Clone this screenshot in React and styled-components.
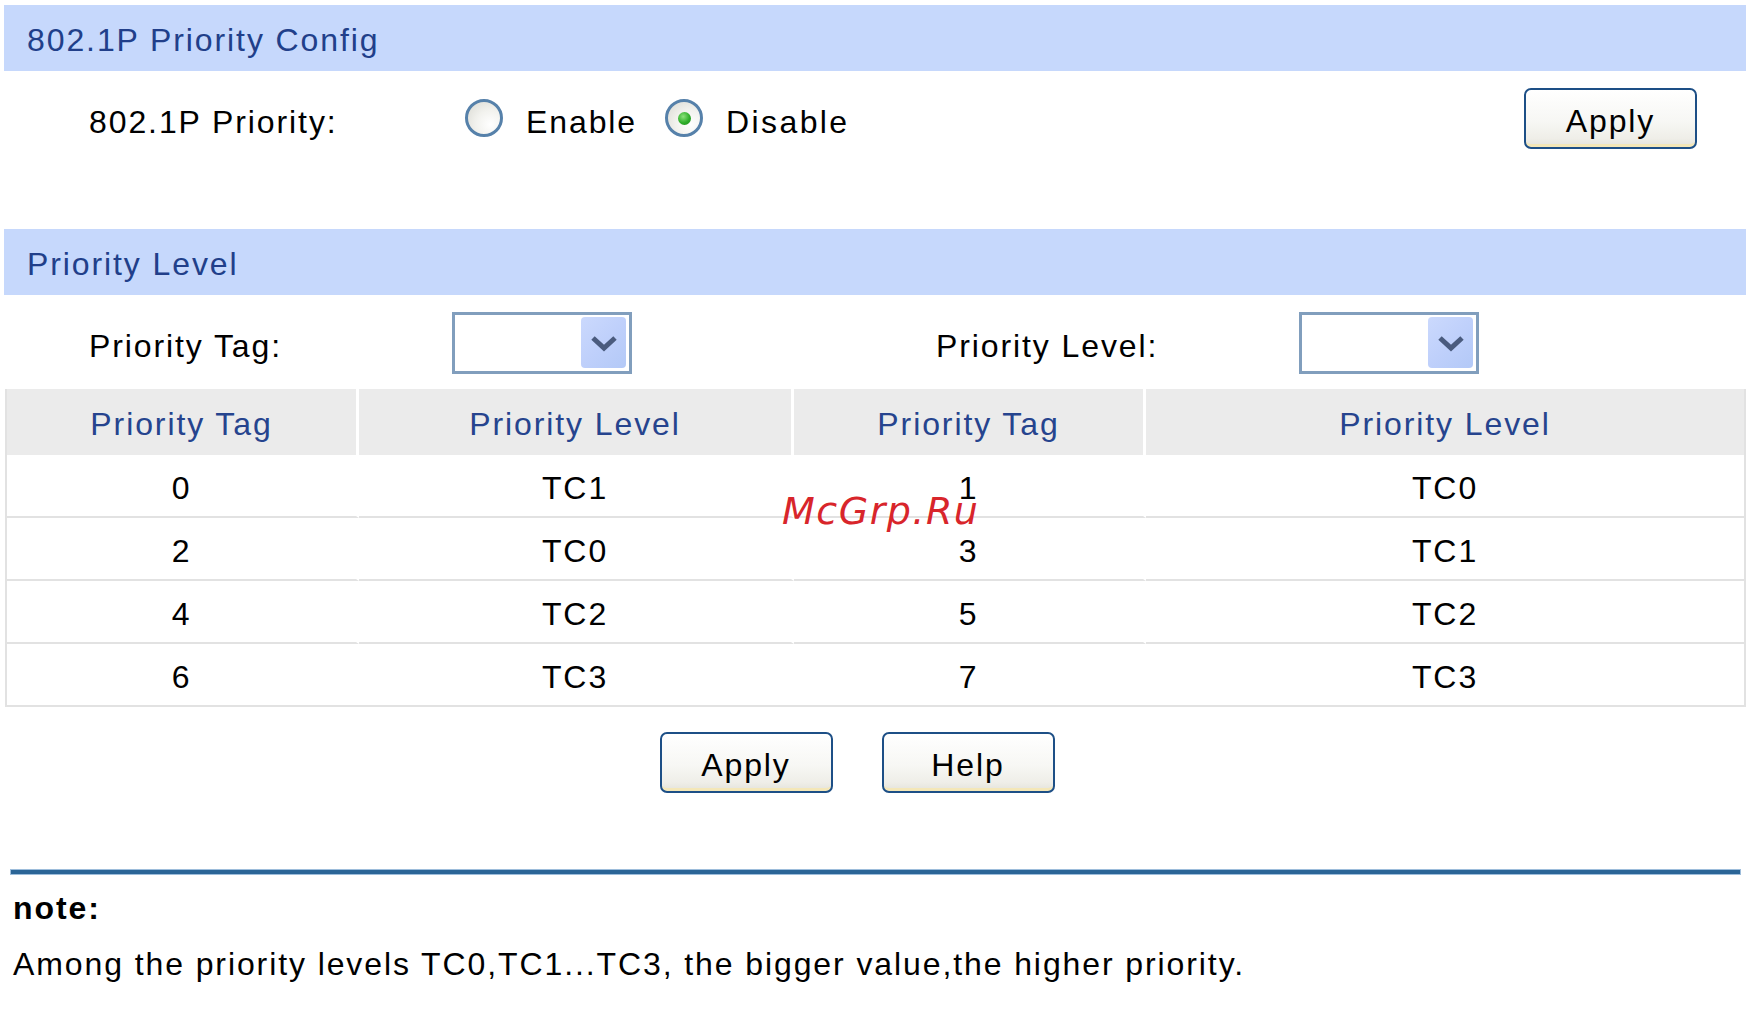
import React from "react";
import styled, { createGlobalStyle } from "styled-components";

const GlobalStyle = createGlobalStyle`
  html, body {
    margin: 0;
    padding: 0;
    background: #ffffff;
  }
  body {
    font-family: "Liberation Sans", Arial, sans-serif;
    font-size: 32px;
    letter-spacing: 1.9px;
    color: #000000;
  }
`;

const Page = styled.div`
  width: 1742px;
  padding: 5px 7px 0 4px;
`;

const SectionTitle = styled.div`
  height: 66px;
  display: flex;
  align-items: center;
  padding: 5px 0 0 23px;
  box-sizing: border-box;
  background: #c6d8fc;
  color: #213f8a;
`;

const PriorityRow = styled.div`
  height: 158px;
  display: grid;
  grid-template-columns: 363px 1fr auto;
  align-items: start;
  padding: 17px 49px 0 85px;
  box-sizing: border-box;
`;

const SelectRow = styled.div`
  height: 94px;
  display: grid;
  grid-template-columns: 363px 484px 363px auto;
  align-items: start;
  padding: 17px 0 0 85px;
  box-sizing: border-box;
`;

const Label = styled.span`
  height: 62px;
  display: flex;
  align-items: center;
  padding-top: 6px;
  box-sizing: border-box;
`;

const RadioGroup = styled.div`
  height: 62px;
  display: flex;
  align-items: center;
  padding-left: 13px;
  padding-top: 6px;
  box-sizing: border-box;
`;

const RadioOption = styled.label`
  display: flex;
  align-items: center;
  gap: 23px;
  margin-right: 28px;
  letter-spacing: ${(p) => (p.wide ? "2.4px" : "1.9px")};
`;

const RadioCircle = styled.span`
  width: 38px;
  height: 38px;
  box-sizing: border-box;
  border-radius: 50%;
  border: 3px solid #5681aa;
  margin-top: -8px;
  background: radial-gradient(circle at 70% 70%, #ffffff 0%, #f2f2ee 45%, #d9d9d2 100%);
  display: flex;
  align-items: center;
  justify-content: center;

  &::after {
    content: "";
    width: 13px;
    height: 13px;
    border-radius: 50%;
    background: radial-gradient(circle at 40% 35%, #8be27a 0%, #2fae2a 55%, #1d8a1d 100%);
    display: ${(p) => (p.checked ? "block" : "none")};
  }
`;

const Button = styled.button`
  width: 173px;
  height: 61px;
  box-sizing: border-box;
  border: 2px solid #1d4f86;
  border-radius: 7px;
  background: linear-gradient(to bottom, #ffffff 0%, #f7f7f4 55%, #efeee8 85%, #e3e2da 100%);
  box-shadow: inset 0 -5px 0 -2px #f4e7b8;
  font-family: "Liberation Sans", Arial, sans-serif;
  font-size: 32px;
  letter-spacing: 1.9px;
  color: #000000;
  padding: 6px 0 0;
`;

const Select = styled.div`
  width: 180px;
  height: 62px;
  box-sizing: border-box;
  border: 3px solid #819ebd;
  background: #ffffff;
  display: flex;
  justify-content: flex-end;
  align-items: stretch;
  padding: 2px 3px 3px 0;
`;

const SelectArrow = styled.span`
  width: 45px;
  border-radius: 4px;
  background: linear-gradient(135deg, #cbd9fd 0%, #bfd0fb 50%, #b3c9f7 100%);
  display: flex;
  align-items: center;
  justify-content: center;
`;

const TableArea = styled.div`
  position: relative;
  padding-left: 1px;
`;

const Table = styled.table`
  width: 100%;
  table-layout: fixed;
  border-collapse: separate;
  border-spacing: 0;
  border: 2px solid #e2e2e2;
  border-top: none;
`;

const HeadCell = styled.th`
  height: 61px;
  background: #ebebeb;
  color: #26448e;
  font-weight: normal;
  text-align: center;
  padding: 5px 0 0;
  border-right: 3px solid #ffffff;

  &:last-child {
    border-right: none;
  }
`;

const Cell = styled.td`
  height: 56px;
  text-align: center;
  padding: 5px 0 0;
  border-bottom: 2px solid #e2e2e2;
  border-right: 3px solid #ffffff;

  &:last-child {
    border-right: none;
  }

  tr:last-child > & {
    border-bottom: none;
  }
`;

const Watermark = styled.span`
  position: absolute;
  left: 778px;
  top: 103px;
  font-family: "DejaVu Sans", Verdana, sans-serif;
  font-style: italic;
  font-size: 38px;
  line-height: 38px;
  letter-spacing: 1.5px;
  color: #d8252b;
`;

const ButtonBar = styled.div`
  display: flex;
  justify-content: center;
  gap: 49px;
  margin-top: 25px;
  padding-right: 36px;
`;

const Divider = styled.div`
  height: 4px;
  margin: 77px 6px 0 7px;
  background: #2b6597;
  box-shadow: 0 0 0 1px #9dbddb;
`;

const NoteTitle = styled.div`
  margin: 14px 0 0 9px;
  line-height: 40px;
  font-weight: bold;
`;

const NoteText = styled.div`
  margin: 16px 0 0 9px;
  line-height: 40px;
`;

const Chevron = () => (
  <svg width="28" height="18" viewBox="0 0 28 18">
    <polyline points="3,4 14,14 25,4" fill="none" stroke="#4a5b7e" strokeWidth="5" />
  </svg>
);

const Radio = ({ checked, wide, children }) => (
  <RadioOption wide={wide}>
    <RadioCircle checked={checked} />
    {children}
  </RadioOption>
);

const DropDown = () => (
  <Select>
    <SelectArrow>
      <Chevron />
    </SelectArrow>
  </Select>
);

const mapping = [
  ["0", "TC1", "1", "TC0"],
  ["2", "TC0", "3", "TC1"],
  ["4", "TC2", "5", "TC2"],
  ["6", "TC3", "7", "TC3"],
];

export default function App() {
  return (
    <Page>
      <GlobalStyle />
      <SectionTitle>802.1P Priority Config</SectionTitle>
      <PriorityRow>
        <Label>802.1P Priority:</Label>
        <RadioGroup>
          <Radio>Enable</Radio>
          <Radio checked wide>
            Disable
          </Radio>
        </RadioGroup>
        <Button>Apply</Button>
      </PriorityRow>

      <SectionTitle>Priority Level</SectionTitle>
      <SelectRow>
        <Label>Priority Tag:</Label>
        <DropDown />
        <Label>Priority Level:</Label>
        <DropDown />
      </SelectRow>

      <TableArea>
        <Table>
          <colgroup>
            <col style={{ width: "352px" }} />
            <col style={{ width: "435px" }} />
            <col style={{ width: "352px" }} />
            <col />
          </colgroup>
          <thead>
            <tr>
              <HeadCell>Priority Tag</HeadCell>
              <HeadCell>Priority Level</HeadCell>
              <HeadCell>Priority Tag</HeadCell>
              <HeadCell>Priority Level</HeadCell>
            </tr>
          </thead>
          <tbody>
            {mapping.map((row) => (
              <tr key={row[0]}>
                {row.map((v, i) => (
                  <Cell key={i}>{v}</Cell>
                ))}
              </tr>
            ))}
          </tbody>
        </Table>
        <Watermark>McGrp.Ru</Watermark>
      </TableArea>

      <ButtonBar>
        <Button>Apply</Button>
        <Button>Help</Button>
      </ButtonBar>

      <Divider />
      <NoteTitle>note:</NoteTitle>
      <NoteText>Among the priority levels TC0,TC1...TC3, the bigger value,the higher priority.</NoteText>
    </Page>
  );
}
